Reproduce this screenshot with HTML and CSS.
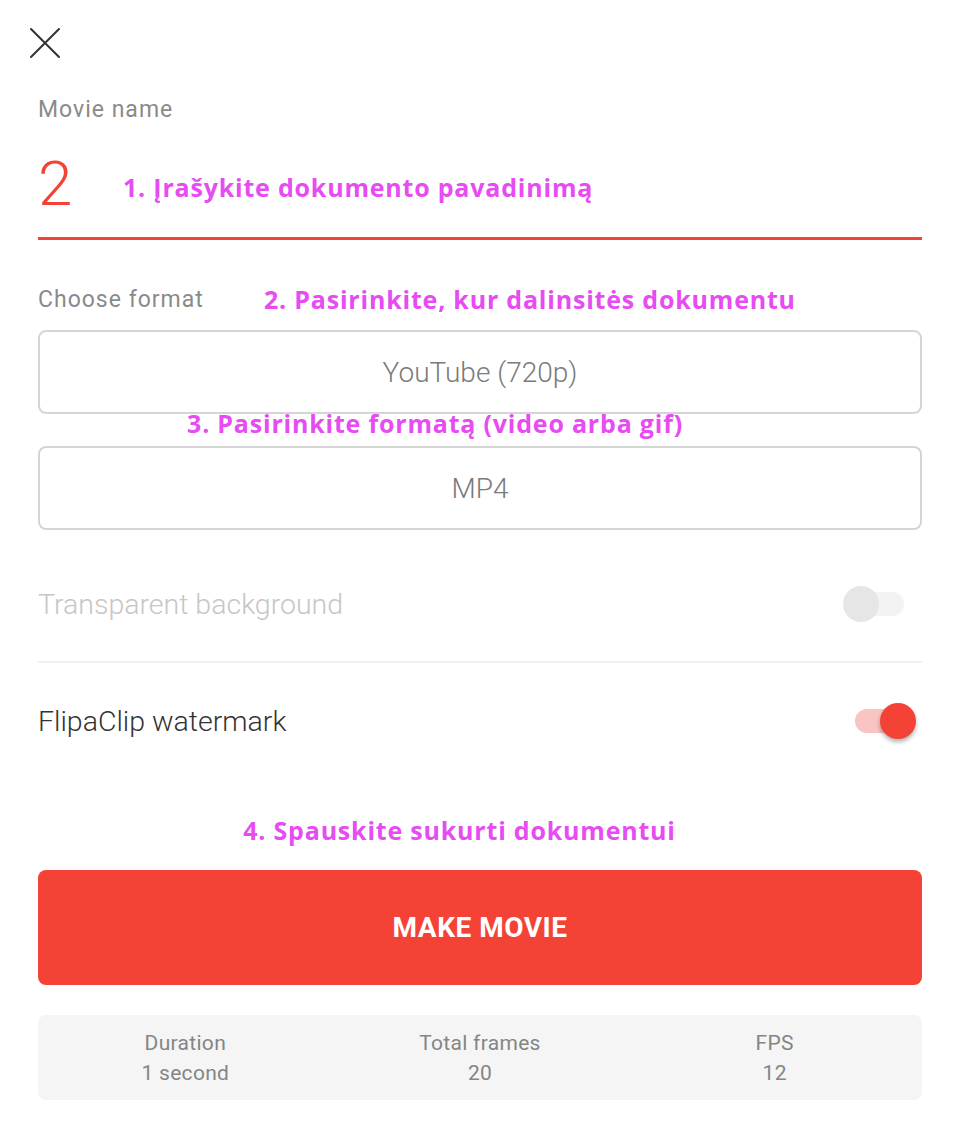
FILE: index.html
```html
<!DOCTYPE html>
<html lang="lt">
<head>
<meta charset="utf-8">
<link rel="stylesheet" href="styles.css">
<title>Make movie</title>
</head>
<body>
<div class="page">
  <div class="topbar">
    <svg class="close" width="32" height="32" viewBox="0 0 32 32"><path d="M2 2 L30 30 M30 2 L2 30" stroke="#333" stroke-width="2" stroke-linecap="round" fill="none"/></svg>
  </div>

  <div class="label movie-label">Movie name</div>
  <div class="name-row">
    <span class="name-value">2</span>
    <span class="note note-1">1. Įrašykite dokumento pavadinimą</span>
  </div>

  <div class="format-head">
    <span class="label">Choose format</span>
    <span class="note note-2">2. Pasirinkite, kur dalinsitės dokumentu</span>
  </div>
  <div class="select">YouTube (720p)</div>
  <div class="note note-3">3. Pasirinkite formatą (video arba gif)</div>
  <div class="select">MP4</div>

  <div class="row row-disabled">
    <span>Transparent background</span>
    <span class="switch switch-off"><span class="knob"></span></span>
  </div>
  <div class="row">
    <span>FlipaClip watermark</span>
    <span class="switch switch-on"><span class="knob"></span></span>
  </div>

  <div class="note note-4">4. Spauskite sukurti dokumentui</div>
  <button class="make">MAKE MOVIE</button>

  <div class="stats">
    <div class="stat"><div>Duration</div><div>1 second</div></div>
    <div class="stat"><div>Total frames</div><div>20</div></div>
    <div class="stat"><div>FPS</div><div>12</div></div>
  </div>
</div>
</body>
</html>
```

FILE: styles.css
```css
* { box-sizing: border-box; }
html, body { margin: 0; padding: 0; background: #fff; }
body { font-family: Roboto, "Liberation Sans", sans-serif; }

.page {
  width: 962px;
  padding: 0 40px 0 38px;
}

.topbar {
  height: 95px;
  padding-top: 27px;
}
.close { display: block; margin-left: -9px; }

.label {
  font-size: 23px;
  letter-spacing: 1px;
  color: #8a8a8a;
  font-weight: 400;
}
.movie-label { line-height: 30px; }

.name-row {
  display: flex;
  align-items: center;
  height: 115px;
  padding-top: 6px;
  border-bottom: 3px solid #f44336;
}
.name-value {
  font-size: 62px;
  font-weight: 300;
  color: #f44336;
  line-height: 1;
  width: 85px;
}
.note {
  font-family: "Open Sans", Lato, sans-serif;
  font-weight: 700;
  color: #e64cf2;
  font-size: 25px;
  letter-spacing: 0.8px;
  line-height: 30px;
  white-space: nowrap;
}
.note-1 { margin-top: 6px; }

.format-head {
  display: flex;
  align-items: center;
  margin-top: 44px;
  height: 30px;
}
.format-head .label { width: 226px; flex: none; }

.select {
  height: 84px;
  border: 2px solid #d5d5d5;
  border-radius: 8px;
  display: flex;
  align-items: center;
  justify-content: center;
  font-size: 28px;
  font-weight: 300;
  color: #7a7a7a;
}
.format-head + .select { margin-top: 16px; }
.note-3 {
  text-align: center;
  margin: -6px 0 8px;
  padding-right: 90px;
}

.row {
  display: flex;
  justify-content: space-between;
  align-items: center;
  height: 116px;
  font-size: 28.5px;
  font-weight: 300;
  color: #333;
}
.row-disabled {
  color: #c6c6c6;
  border-bottom: 2px solid #f0f0f0;
  margin-top: 17px;
}
.switch {
  position: relative;
  display: block;
  height: 24px;
  border-radius: 12px;
}
.switch .knob {
  position: absolute;
  top: -6px;
  width: 36px;
  height: 36px;
  border-radius: 50%;
}
.switch-off { width: 60px; background: #f3f3f3; margin-right: 18px; }
.switch-off .knob { left: -1px; background: #e6e6e6; }
.switch-on { width: 50px; background: #f9c4c2; margin-right: 17px; }
.switch-on .knob { left: 25px; background: #f44336; box-shadow: 0 3px 4px rgba(0,0,0,0.3); }

.note-4 {
  text-align: center;
  margin-top: 36px;
  padding-right: 41px;
}

.make {
  display: block;
  width: 100%;
  height: 115px;
  margin-top: 25px;
  border: none;
  border-radius: 8px;
  background: #f44336;
  color: #fff;
  font-family: Roboto, "Liberation Sans", sans-serif;
  font-weight: 700;
  font-size: 28px;
  letter-spacing: 0.5px;
}

.stats {
  margin-top: 30px;
  height: 85px;
  background: #f5f5f5;
  border-radius: 8px;
  display: grid;
  grid-template-columns: 1fr 1fr 1fr;
  align-content: center;
}
.stat {
  text-align: center;
  font-size: 21px;
  letter-spacing: 0.3px;
  line-height: 30px;
  color: #858585;
}
```
